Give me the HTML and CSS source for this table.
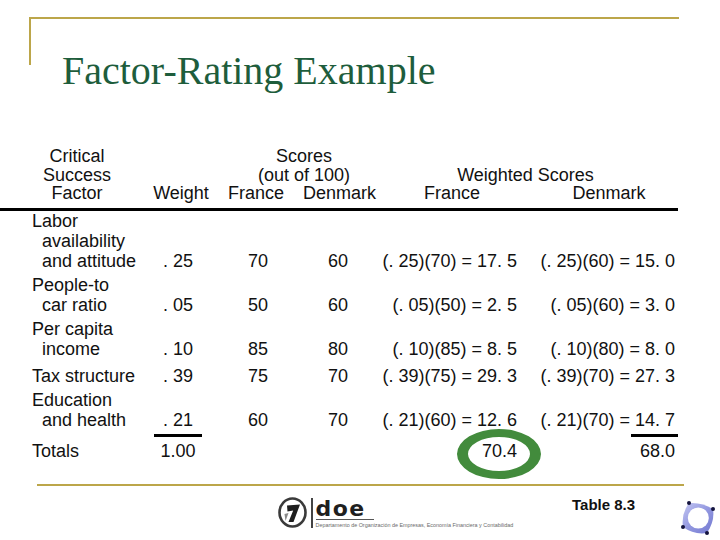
FILE: index.html
```html
<!DOCTYPE html>
<html>
<head>
<meta charset="utf-8">
<link rel="stylesheet" href="styles.css">
</head>
<body>
<div class="slide">
  <div class="frame">
    <h1 class="title">Factor-Rating Example</h1>
  </div>

  <div class="tbl">
    <div class="thead">
      <div class="h-factor">Critical<br>Success<br>Factor</div>
      <div class="h-weight">Weight</div>
      <div class="h-scores">Scores<br>(out of 100)</div>
      <div class="h-fr">France</div>
      <div class="h-dk">Denmark</div>
      <div class="h-ws">Weighted Scores</div>
      <div class="h-wfr">France</div>
      <div class="h-wdk">Denmark</div>
    </div>
    <div class="rule"></div>

    <div class="tr">
      <div class="lbl">Labor<br>availability<br>and attitude</div>
      <div class="c">. 25</div>
      <div class="c">70</div>
      <div class="c">60</div>
      <div class="r">(. 25)(70) = 17. 5</div>
      <div class="r2">(. 25)(60) = 15. 0</div>
    </div>
    <div class="tr">
      <div class="lbl">People-to<br>car ratio</div>
      <div class="c">. 05</div>
      <div class="c">50</div>
      <div class="c">60</div>
      <div class="r">(. 05)(50) = 2. 5</div>
      <div class="r2">(. 05)(60) = 3. 0</div>
    </div>
    <div class="tr">
      <div class="lbl">Per capita<br>income</div>
      <div class="c">. 10</div>
      <div class="c">85</div>
      <div class="c">80</div>
      <div class="r">(. 10)(85) = 8. 5</div>
      <div class="r2">(. 10)(80) = 8. 0</div>
    </div>
    <div class="tr tr-tax">
      <div class="lbl">Tax structure</div>
      <div class="c">. 39</div>
      <div class="c">75</div>
      <div class="c">70</div>
      <div class="r">(. 39)(75) = 29. 3</div>
      <div class="r2">(. 39)(70) = 27. 3</div>
    </div>
    <div class="tr">
      <div class="lbl">Education<br>and health</div>
      <div class="c">. 21</div>
      <div class="c">60</div>
      <div class="c">70</div>
      <div class="r">(. 21)(60) = 12. 6</div>
      <div class="r2">(. 21)(70) = 14. 7</div>
    </div>
    <div class="tr sum-rules">
      <div></div>
      <div class="bar-wrap-c"><div class="bar bar-w"></div></div>
      <div></div>
      <div></div>
      <div></div>
      <div class="bar-wrap-r"><div class="bar bar-d"></div></div>
    </div>
    <div class="tr">
      <div class="lbl">Totals</div>
      <div class="c">1.00</div>
      <div></div>
      <div></div>
      <div class="r"><span class="circled">70.4<span class="ring"></span></span></div>
      <div class="r2">68.0</div>
    </div>
  </div>

  <div class="gold-line"></div>

  <div class="footer">
    <div class="logo">
      <svg class="logo-mark" width="29" height="31" viewBox="0 0 29 31">
        <ellipse cx="14.5" cy="15.5" rx="13" ry="14" fill="#fff" stroke="#3a3a3a" stroke-width="2.6"/>
        <path d="M9 8.5 L22 7.5 L15.5 25 L10.5 25 L15.2 13.5 L9.5 14.5 Z" fill="#1e1e1e"/>
        <path d="M6.5 17 L10.5 16 L7.5 24 Z" fill="#8a8a8a"/>
      </svg>
      <div class="logo-bar"></div>
      <div class="logo-text">
        <div class="doe">doe</div>
        <div class="dept">Departamento de Organización de Empresas, Economía Financiera y Contabilidad</div>
      </div>
    </div>
    <div class="table-ref">Table 8.3</div>
    <svg class="corner-mark" width="36" height="38" viewBox="0 0 36 38">
      <defs>
        <linearGradient id="rg" x1="0" y1="0" x2="1" y2="1">
          <stop offset="0" stop-color="#c3c6f2"/>
          <stop offset="0.5" stop-color="#9398e0"/>
          <stop offset="1" stop-color="#7278d0"/>
        </linearGradient>
      </defs>
      <path d="M8 4 Q21 3 32 10 Q34 22 26 34 Q13 36 2 28 Q0 15 8 4 Z" fill="url(#rg)"/>
      <circle cx="17.3" cy="19" r="10.5" fill="#fff"/>
      <circle cx="8" cy="4" r="2" fill="#14143e"/>
      <circle cx="32" cy="10" r="2" fill="#14143e"/>
      <circle cx="2" cy="28" r="2" fill="#14143e"/>
      <circle cx="26" cy="34" r="2" fill="#14143e"/>
    </svg>
  </div>
</div>
</body>
</html>
```

FILE: styles.css
```css
* { box-sizing: border-box; }

html, body {
  margin: 0;
  padding: 0;
  background: #fff;
}

.slide {
  width: 720px;
  height: 540px;
  overflow: hidden;
  position: relative;
  background: #fff;
  font-family: "Liberation Sans", Arial, sans-serif;
  color: #111;
}

.frame {
  margin: 17px 0 0 29px;
  width: 650px;
  height: 48px;
  border-top: 2px solid #bca64a;
  border-left: 2px solid #bca64a;
  padding: 31.5px 0 0 31px;
}

.title {
  margin: 0;
  font-family: "Liberation Serif", "Times New Roman", serif;
  font-weight: normal;
  font-size: 40px;
  line-height: 40px;
  color: #1e5d3c;
  white-space: nowrap;
}

.tbl {
  margin-top: 82px;
  width: 678px;
  display: flex;
  flex-direction: column;
  font-size: 18px;
}

.thead,
.tr {
  display: grid;
  grid-template-columns: 143px 70px 90px 70px 144px 161px;
}

.thead {
  grid-template-rows: 37px 18.5px;
  line-height: 18.5px;
  align-items: end;
}

.h-factor {
  grid-column: 1;
  grid-row: 1 / 3;
  text-align: center;
  padding-left: 11px;
}
.h-weight { grid-column: 2; grid-row: 2; text-align: center; padding-left: 6px; }
.h-scores { grid-column: 3 / 5; grid-row: 1; text-align: center; padding-left: 22px; }
.h-fr { grid-column: 3; grid-row: 2; text-align: center; padding-right: 4px; }
.h-dk { grid-column: 4; grid-row: 2; text-align: center; }
.h-ws { grid-column: 5 / 7; grid-row: 1; text-align: center; }
.h-wfr { grid-column: 5; grid-row: 2; text-align: center; padding-left: 14px; }
.h-wdk { grid-column: 6; grid-row: 2; text-align: center; padding-left: 23px; }

.rule {
  margin-top: 5.5px;
  height: 3px;
  background: #000;
}

.tr {
  line-height: 20px;
  align-items: end;
  margin-top: 4px;
  white-space: nowrap;
}

.rule + .tr { margin-top: 0; }
.tr-tax { margin-top: 7px; }

.lbl {
  padding-left: 42px;
  text-indent: -10px;
}

.c { text-align: center; }
.r { text-align: right; }
.r2 { text-align: right; padding-right: 3px; }

.sum-rules {
  line-height: 0;
  height: 3px;
}

.bar-wrap-c {
  display: flex;
  justify-content: center;
}
.bar-wrap-r {
  display: flex;
  justify-content: flex-end;
}
.bar {
  height: 3px;
  background: #000;
}
.bar-w { width: 48px; }
.bar-d { width: 47px; }

.circled {
  position: relative;
  display: inline-block;
}

.ring {
  position: absolute;
  left: 50%;
  top: 50%;
  width: 84px;
  height: 50px;
  transform: translate(-50%, -44%);
  border-style: solid;
  border-color: #428b3c;
  border-width: 8px 11px;
  border-radius: 50%;
}

.gold-line {
  margin: 23px 0 0 37px;
  width: 647px;
  height: 2px;
  background: #bca64a;
}

.footer {
  display: flex;
  align-items: flex-start;
  padding-left: 278px;
}

.logo {
  width: 294px;
  margin-top: 11px;
  display: flex;
  align-items: flex-start;
}

.logo-mark {
  display: block;
  flex: none;
}

.logo-bar {
  width: 1.5px;
  height: 30px;
  margin: 1px 3px 0 4px;
  background: #444;
  flex: none;
}

.logo-text {
  display: flex;
  flex-direction: column;
}

.doe {
  font-family: "DejaVu Sans", sans-serif;
  font-weight: bold;
  font-size: 22px;
  line-height: 20px;
  letter-spacing: 1.5px;
  color: #1f1f1f;
  margin-top: 2px;
  border-bottom: 1px solid #555;
  width: 58px;
}

.dept {
  font-size: 5.4px;
  line-height: 6px;
  color: #6a6a6a;
  white-space: nowrap;
  margin-top: 2px;
}

.table-ref {
  width: 109px;
  margin-top: 11px;
  font-weight: bold;
  font-size: 15px;
  line-height: 15px;
  color: #111;
  white-space: nowrap;
}

.corner-mark {
  display: block;
  margin-top: 13px;
  flex: none;
}
```
